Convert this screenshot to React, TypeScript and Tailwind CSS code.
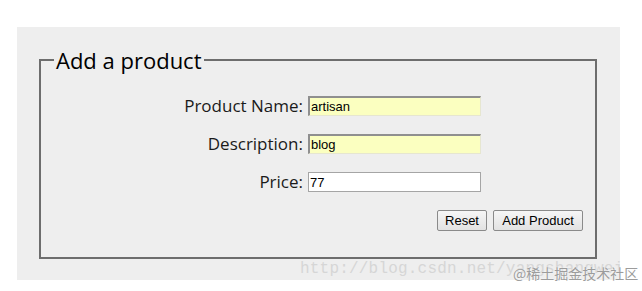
import React from 'react';

const labelFont = { fontFamily: '"Open Sans", "Noto Sans", sans-serif' };

function Field({ label, value, filled }: { label: string; value: string; filled?: boolean }) {
  return (
    <>
      <label className="text-right text-[17px] leading-[20px] text-[#1a1a1a]" style={labelFont}>
        {label}
      </label>
      <input
        defaultValue={value}
        className={
          'h-[20px] w-[173px] px-[1px] text-[13px] text-black outline-none font-["Liberation_Sans",Arial,sans-serif] ' +
          (filled
            ? 'bg-[#fbffc0] border-t-2 border-l-2 border-r border-b border-t-[#8f8f8f] border-l-[#8f8f8f] border-r-[#e6e6d0] border-b-[#e6e6d0]'
            : 'bg-white border border-[#a5a5a5]')
        }
      />
    </>
  );
}

export default function App() {
  return (
    <div className="relative h-[291px] w-[642px] overflow-hidden bg-white">
      <div className="ml-[17px] mt-[27px] h-[253px] w-[603px] bg-[#eeeeee] pt-[20px] pl-[22px]">
        <fieldset className="w-[558px] border-2 border-[#6d6d6d] px-0 pb-[26px]">
          <legend
            className="ml-[13px] px-[2px] text-[22px] leading-[26px] text-black"
            style={labelFont}
          >
            Add a product
          </legend>
          <div className="mt-[23px] grid grid-cols-[262px_173px] items-center gap-x-[5px] gap-y-[18px]">
            <Field label="Product Name:" value="artisan" filled />
            <Field label="Description:" value="blog" filled />
            <Field label="Price:" value="77" />
          </div>
          <div className="mt-[18px] flex justify-end gap-[6px] pr-[12px]">
            <button className="h-[21px] w-[50px] rounded-[2px] border border-[#8a8a8a] bg-gradient-to-b from-[#f6f6f6] to-[#e2e2e2] text-[13px] leading-[19px] text-black font-['Liberation_Sans',Arial,sans-serif]">
              Reset
            </button>
            <button className="h-[21px] w-[90px] rounded-[2px] border border-[#8a8a8a] bg-gradient-to-b from-[#f6f6f6] to-[#e2e2e2] text-[13px] leading-[19px] text-black font-['Liberation_Sans',Arial,sans-serif]">
              Add Product
            </button>
          </div>
        </fieldset>
      </div>
      <div className="pointer-events-none absolute left-[300px] top-[259px] whitespace-nowrap text-[16px] leading-[20px] tracking-[0.2px] text-[#d6d6d6] font-['Liberation_Mono',monospace]">
        http://blog.csdn.net/yangshangwei
      </div>
      <div className="pointer-events-none absolute left-[513px] top-[264px] whitespace-nowrap text-[14px] leading-[18px] text-[#9c9c9c] [text-shadow:0_0_2px_#fff] font-['Noto_Sans_CJK_SC',sans-serif]">
        @稀土掘金技术社区
      </div>
    </div>
  );
}
